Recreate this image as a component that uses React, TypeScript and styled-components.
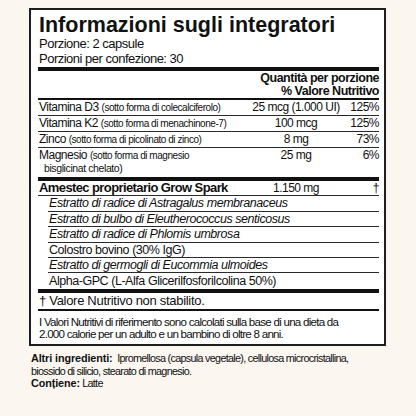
import React from "react";
import styled, { createGlobalStyle } from "styled-components";

const GlobalStyle = createGlobalStyle`
  html, body {
    margin: 0;
    padding: 0;
    background: #fbf6f0;
  }
  body {
    font-family: "Liberation Sans", Arial, sans-serif;
    letter-spacing: -0.5px;
    color: #101010;
  }
`;

const Page = styled.div`
  width: 416px;
  height: 416px;
  box-sizing: border-box;
  padding: 8px 0 0 29px;
`;

const Label = styled.section`
  width: 357px;
  box-sizing: border-box;
  border: 2px solid #1e1e1e;
  background: #fff;
  padding: 0 5px 0 7px;
`;

const Title = styled.h1`
  margin: 4px 0 0 1px;
  font-weight: 700;
  font-size: 21.5px;
  line-height: 22px;
  letter-spacing: 0;
  color: #111;
`;

const ServingLine = styled.div`
  font-size: 13px;
  line-height: 15px;
  padding-left: 1px;
`;

const Bar = styled.div<{ $h: number; $gap?: number }>`
  height: ${(p) => p.$h}px;
  margin-top: ${(p) => p.$gap || 0}px;
  background: #111;
`;

const ColumnHead = styled.div`
  text-align: right;
  font-weight: 700;
  font-size: 12.5px;
  line-height: 12.5px;
  padding: 1px 0;
`;

const Row = styled.div<{ $indent?: boolean; $last?: boolean; $h?: number }>`
  display: grid;
  grid-template-columns: 1fr 100px 33px;
  align-items: start;
  margin-left: ${(p) => (p.$indent ? 10 : 0)}px;
  border-bottom: ${(p) => (p.$last ? "none" : "1px solid #2a2a2a")};
  font-size: 12px;
  line-height: ${(p) => p.$h || 15}px;
  white-space: nowrap;
`;

const Name = styled.div<{ $bold?: boolean; $blend?: boolean }>`
  padding-left: 1px;
  font-weight: ${(p) => (p.$bold ? 700 : 400)};
  font-size: ${(p) => (p.$bold ? 13 : p.$blend ? 12.5 : 12)}px;
  letter-spacing: ${(p) => (p.$bold ? -0.6 : p.$blend ? -0.45 : -0.5)}px;
`;

const Latin = styled.span`
  font-style: italic;
`;

const Sub = styled.span`
  font-size: 10px;
  letter-spacing: -0.45px;
`;

const WrapName = styled.div`
  padding: 1px 0 2px 1px;
  line-height: 13px;
`;

const WrapLine = styled.div`
  padding-left: 5px;
  font-size: 10.5px;
  letter-spacing: -0.4px;
`;

const Amount = styled.div`
  text-align: center;
`;

const Pct = styled.div`
  text-align: right;
`;

const Footnote = styled.div`
  font-size: 13px;
  line-height: 16px;
  letter-spacing: -0.3px;
  padding-left: 1px;
`;

const Disclaimer = styled.p`
  margin: 0;
  padding: 5px 0 4px 1px;
  font-size: 11.6px;
  line-height: 12px;
  letter-spacing: -0.75px;
  white-space: nowrap;
`;

const Extra = styled.p`
  margin: 6px 0 0 2px;
  font-size: 10.8px;
  line-height: 12.5px;
  letter-spacing: -0.7px;
  white-space: nowrap;
`;

const Strong = styled.b`
  font-weight: 700;
  letter-spacing: -0.1px;
`;

type Nutrient = { name: string; sub: string; amount: string; pct: string };

const vitamins: Nutrient[] = [
  { name: "Vitamina D3", sub: "(sotto forma di colecalciferolo)", amount: "25 mcg (1.000 UI)", pct: "125%" },
  { name: "Vitamina K2", sub: "(sotto forma di menachinone-7)", amount: "100 mcg", pct: "125%" },
  { name: "Zinco", sub: "(sotto forma di picolinato di zinco)", amount: "8 mg", pct: "73%" },
];

const blend: { text: string; italic: boolean }[] = [
  { text: "Estratto di radice di Astragalus membranaceus", italic: true },
  { text: "Estratto di bulbo di Eleutherococcus senticosus", italic: true },
  { text: "Estratto di radice di Phlomis umbrosa", italic: true },
  { text: "Colostro bovino (30% IgG)", italic: false },
  { text: "Estratto di germogli di Eucommia ulmoides", italic: true },
  { text: "Alpha-GPC (L-Alfa Glicerilfosforilcolina 50%)", italic: false },
];

export default function App() {
  return (
    <Page>
      <GlobalStyle />
      <Label>
        <Title>Informazioni sugli integratori</Title>
        <ServingLine>Porzione: 2 capsule</ServingLine>
        <ServingLine>Porzioni per confezione: 30</ServingLine>
        <Bar $h={4} $gap={1} />
        <ColumnHead>
          Quantità per porzione
          <br />% Valore Nutritivo
        </ColumnHead>
        <Bar $h={2} />
        {vitamins.map((v) => (
          <Row key={v.name}>
            <Name>
              {v.name} <Sub>{v.sub}</Sub>
            </Name>
            <Amount>{v.amount}</Amount>
            <Pct>{v.pct}</Pct>
          </Row>
        ))}
        <Row $last>
          <WrapName>
            Magnesio <Sub>(sotto forma di magnesio</Sub>
            <WrapLine>bisglicinat chelato)</WrapLine>
          </WrapName>
          <Amount>25 mg</Amount>
          <Pct>6%</Pct>
        </Row>
        <Bar $h={4} />
        <Row $h={14.4}>
          <Name $bold>Amestec proprietario Grow Spark</Name>
          <Amount>1.150 mg</Amount>
          <Pct>†</Pct>
        </Row>
        {blend.map((b, i) => {
          const last = i === blend.length - 1;
          return (
            <Row key={b.text} $indent $last={last} $h={last ? 16 : 14.4}>
              <Name $blend>{b.italic ? <Latin>{b.text}</Latin> : b.text}</Name>
            </Row>
          );
        })}
        <Bar $h={4} />
        <Footnote>† Valore Nutritivo non stabilito.</Footnote>
        <Bar $h={2} />
        <Disclaimer>
          I Valori Nutritivi di riferimento sono calcolati sulla base di una dieta da
          <br />
          2.000 calorie per un adulto e un bambino di oltre 8 anni.
        </Disclaimer>
      </Label>
      <Extra>
        <Strong>Altri ingredienti:</Strong>&nbsp; Ipromellosa (capsula vegetale), cellulosa microcristallina,
        <br />
        biossido di silicio, stearato di magnesio.
        <br />
        <Strong>Conțiene:</Strong> Latte
      </Extra>
    </Page>
  );
}
